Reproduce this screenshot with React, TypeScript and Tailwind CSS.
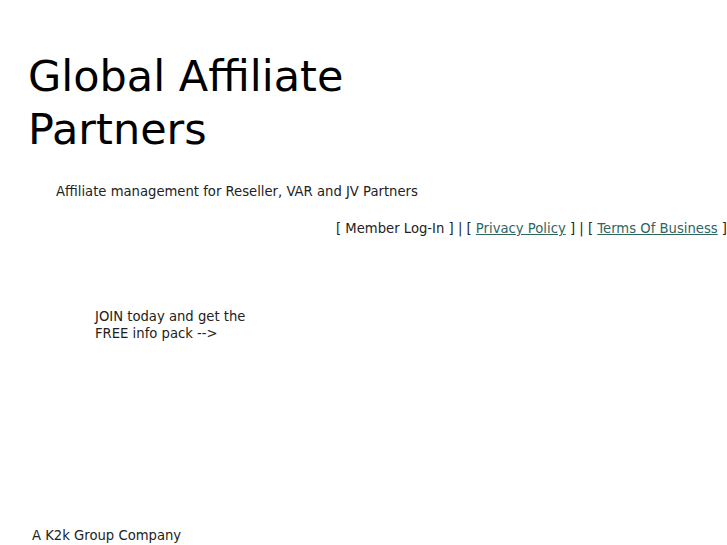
import React from "react";

export default function App() {
  return (
    <div className="w-[727px] h-[545px] bg-white text-black overflow-hidden" style={{ fontFamily: '"DejaVu Sans", sans-serif' }}>
      <div className="pt-[50px] pl-[28px]">
        <h1 className="text-[43px] leading-[53px] font-normal w-[340px]">Global Affiliate Partners</h1>
      </div>
      <p className="mt-[28px] pl-[56px] text-[13.2px] leading-[16px] text-[#222]">Affiliate management for Reseller, VAR and JV Partners</p>
      <p className="mt-[21px] text-right text-[13.2px] leading-[16px] text-[#222] whitespace-nowrap">
        [ Member Log-In ] | [ <a className="underline text-[#2f6660]" href="#">Privacy Policy</a> ] | [ <a className="underline text-[#2f6660]" href="#">Terms Of Business</a> ]
      </p>
      <p className="mt-[71px] pl-[95px] text-[13.2px] leading-[17px] text-[#222]">JOIN today and get the<br />FREE info pack --&gt;</p>
      <p className="mt-[186px] pl-[32px] text-[13.2px] leading-[16px] text-[#222]">A K2k Group Company</p>
    </div>
  );
}
